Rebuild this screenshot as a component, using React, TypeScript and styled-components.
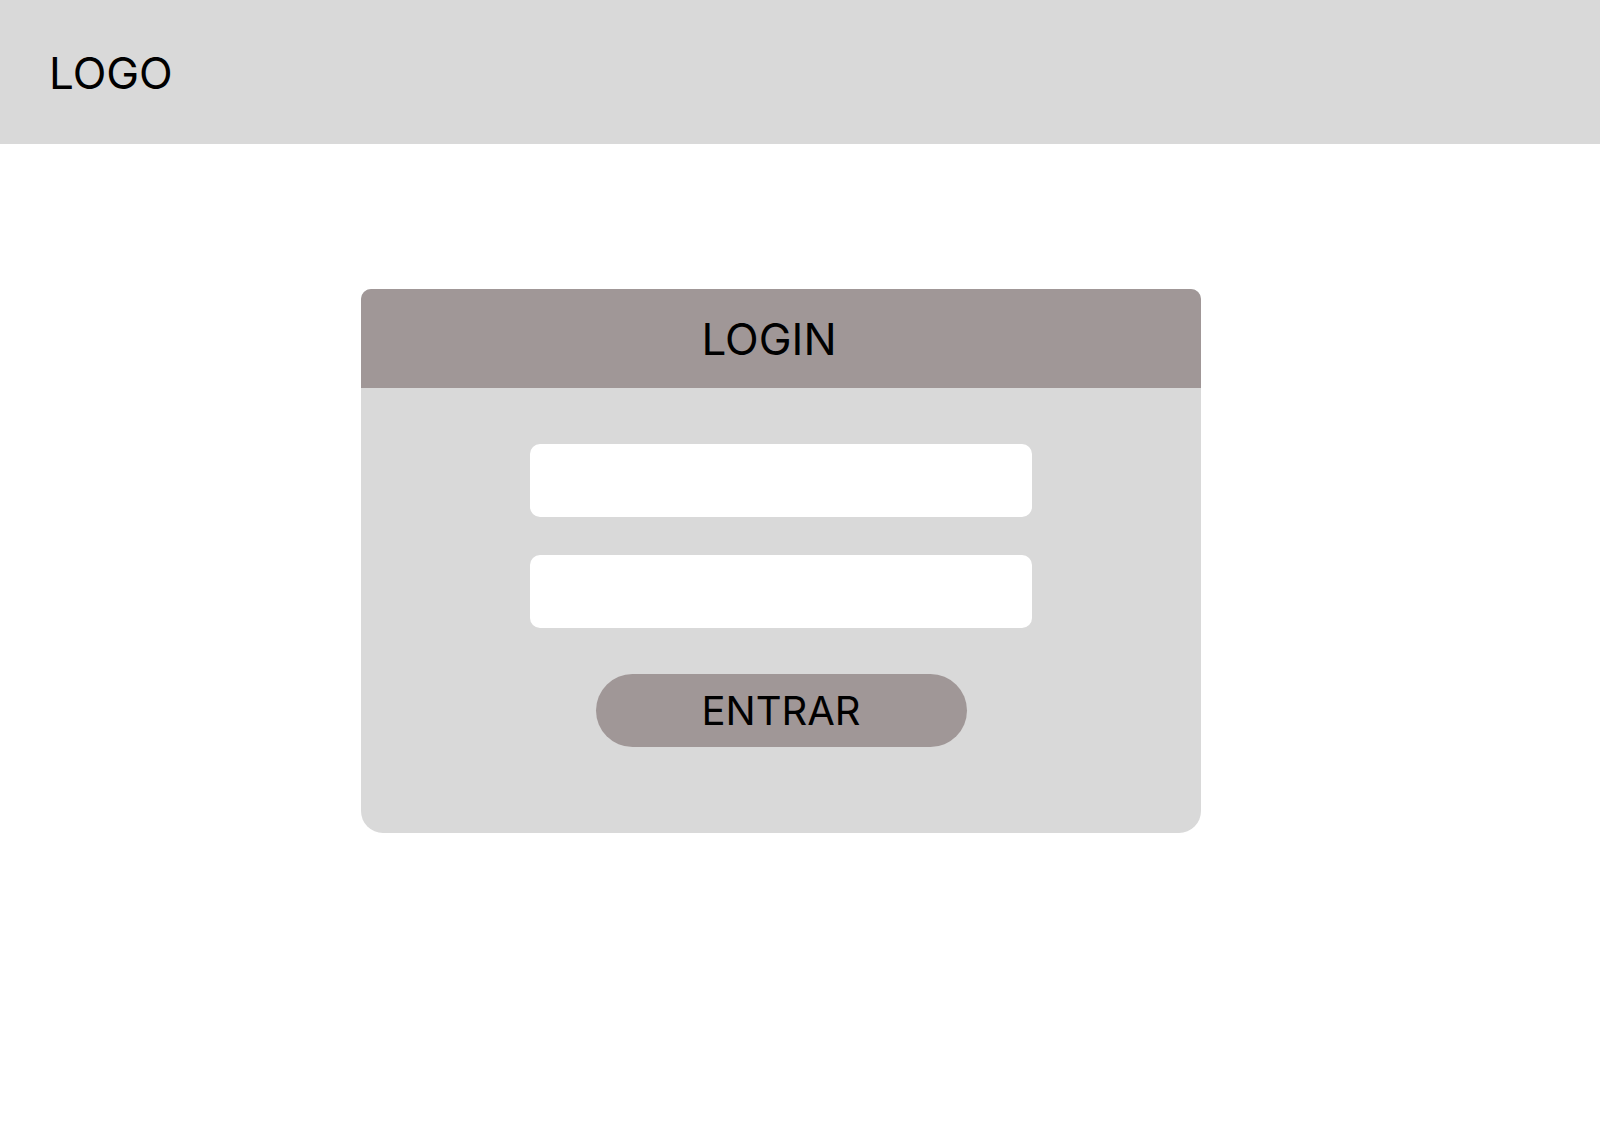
import React from "react";
import styled, { createGlobalStyle } from "styled-components";

const GlobalStyle = createGlobalStyle`
  html, body {
    margin: 0;
    padding: 0;
    background: #ffffff;
    font-family: Inter, "Liberation Sans", sans-serif;
    color: #000000;
  }
  * {
    box-sizing: border-box;
  }
`;

const Page = styled.div`
  width: 100%;
  min-height: 1137px;
  background: #ffffff;
`;

const TopBar = styled.header`
  height: 144px;
  background: #d9d9d9;
  padding: 51px 0 0 49px;
`;

const Logo = styled.div`
  font-size: 44px;
  line-height: 1;
  font-weight: 400;
`;

const Main = styled.main`
  padding: 145px 0 0 361px;
`;

const Card = styled.section`
  width: 840px;
  background: #d9d9d9;
  border-radius: 10px 10px 22px 22px;
  overflow: hidden;
`;

const CardHeader = styled.div`
  height: 99px;
  background: #a09797;
  display: flex;
  align-items: center;
  justify-content: center;
`;

const Title = styled.h1`
  margin: 0;
  padding-right: 24px;
  font-size: 44px;
  line-height: 1;
  font-weight: 400;
`;

const Form = styled.form`
  display: flex;
  flex-direction: column;
  align-items: center;
  padding: 56px 0 86px;
`;

const Field = styled.input<{ $gap?: number }>`
  width: 502px;
  height: 73px;
  border: none;
  outline: none;
  border-radius: 10px;
  background: #ffffff;
  margin-bottom: ${(p) => p.$gap ?? 0}px;
  padding: 0 20px;
  font-family: inherit;
  font-size: 24px;
`;

const SubmitButton = styled.button`
  width: 371px;
  height: 73px;
  border: none;
  border-radius: 37px;
  background: #a09797;
  color: #000000;
  font-family: Inter, "Liberation Sans", sans-serif;
  font-size: 40px;
  line-height: 1;
  font-weight: 400;
  padding: 0;
  cursor: pointer;
  display: flex;
  align-items: center;
  justify-content: center;
`;

const App = () => {
  return (
    <Page>
      <GlobalStyle />
      <TopBar>
        <Logo>LOGO</Logo>
      </TopBar>
      <Main>
        <Card>
          <CardHeader>
            <Title>LOGIN</Title>
          </CardHeader>
          <Form onSubmit={(e) => e.preventDefault()}>
            <Field type="text" $gap={38} />
            <Field type="password" $gap={46} />
            <SubmitButton type="submit">ENTRAR</SubmitButton>
          </Form>
        </Card>
      </Main>
    </Page>
  );
};

export default App;
